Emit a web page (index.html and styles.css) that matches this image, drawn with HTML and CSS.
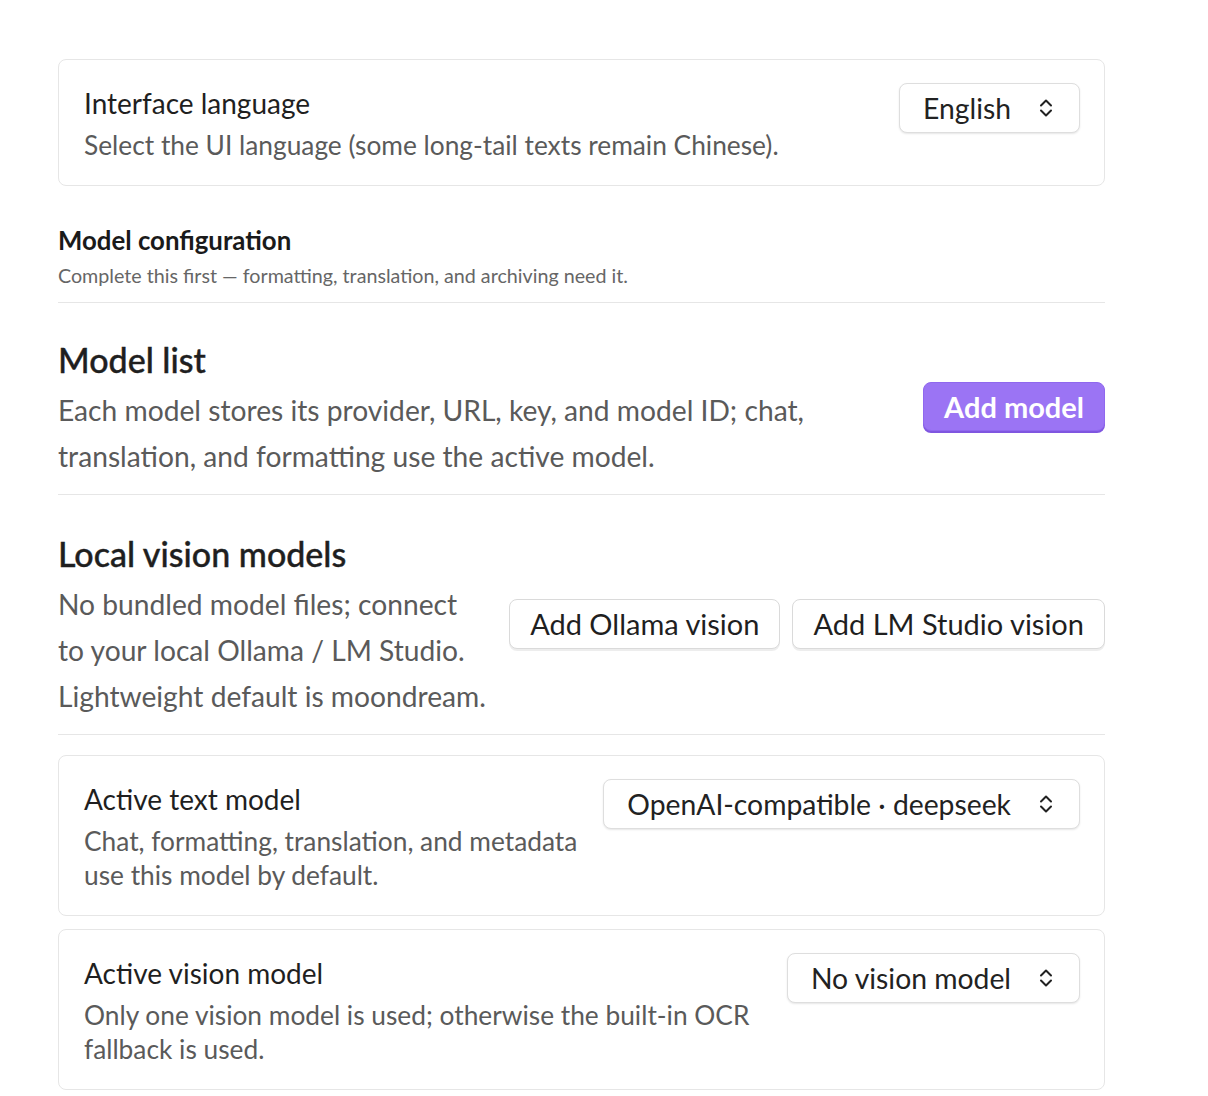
FILE: index.html
```html
<!DOCTYPE html>
<html lang="en">
<head>
<meta charset="utf-8">
<title>Settings</title>
<link rel="stylesheet" href="styles.css">
</head>
<body>
<main class="page">
  <div class="card">
    <div class="info">
      <div class="title">Interface language</div>
      <div class="desc">Select the UI language (some long-tail texts remain Chinese).</div>
    </div>
    <div class="select">
      <span>English</span>
      <svg class="chev" width="14" height="22" viewBox="0 0 14 22"><path d="M2 8.5 L7 3.5 L12 8.5 M2 13.5 L7 18.5 L12 13.5" fill="none" stroke="#222" stroke-width="2" stroke-linecap="round" stroke-linejoin="round"/></svg>
    </div>
  </div>

  <div class="group-head">
    <div class="group-title">Model configuration</div>
    <div class="group-sub">Complete this first — formatting, translation, and archiving need it.</div>
  </div>

  <section class="section">
    <div class="section-text">
      <h2 class="section-title">Model list</h2>
      <p class="section-desc">Each model stores its provider, URL, key, and model ID; chat, translation, and formatting use the active model.</p>
    </div>
    <div class="actions">
      <button class="btn primary">Add model</button>
    </div>
  </section>

  <section class="section section-local">
    <div class="section-text">
      <h2 class="section-title">Local vision models</h2>
      <p class="section-desc nowrap">No bundled model files; connect<br>to your local Ollama / LM Studio.<br>Lightweight default is moondream.</p>
    </div>
    <div class="actions">
      <button class="btn">Add Ollama vision</button>
      <button class="btn">Add LM Studio vision</button>
    </div>
  </section>

  <div class="card card-first">
    <div class="info">
      <div class="title">Active text model</div>
      <div class="desc">Chat, formatting, translation, and metadata use this model by default.</div>
    </div>
    <div class="select">
      <span>OpenAI-compatible · deepseek</span>
      <svg class="chev" width="14" height="22" viewBox="0 0 14 22"><path d="M2 8.5 L7 3.5 L12 8.5 M2 13.5 L7 18.5 L12 13.5" fill="none" stroke="#222" stroke-width="2" stroke-linecap="round" stroke-linejoin="round"/></svg>
    </div>
  </div>

  <div class="card card-next">
    <div class="info">
      <div class="title">Active vision model</div>
      <div class="desc">Only one vision model is used; otherwise the built-in OCR fallback is used.</div>
    </div>
    <div class="select">
      <span>No vision model</span>
      <svg class="chev" width="14" height="22" viewBox="0 0 14 22"><path d="M2 8.5 L7 3.5 L12 8.5 M2 13.5 L7 18.5 L12 13.5" fill="none" stroke="#222" stroke-width="2" stroke-linecap="round" stroke-linejoin="round"/></svg>
    </div>
  </div>
</main>
</body>
</html>
```

FILE: styles.css
```css
* { box-sizing: border-box; }

html, body {
  margin: 0;
  padding: 0;
  background: #ffffff;
}

body {
  font-family: Lato, "Noto Sans", "Liberation Sans", sans-serif;
  color: #222222;
}

.page {
  width: 1105px;
  padding: 59px 0 0 58px;
}

.card {
  display: flex;
  align-items: flex-start;
  gap: 24px;
  border: 1px solid #e6e6e6;
  border-radius: 8px;
  padding: 23px 24px 23px 25px;
  background: #fff;
}

.card-first { margin-top: 20px; }
.card-next { margin-top: 13px; }

.info {
  flex: 1;
  min-width: 0;
}

.title {
  font-size: 28px;
  line-height: 41px;
  color: #1f1f1f;
}

.desc {
  margin-top: 4px;
  font-size: 26.3px;
  line-height: 34px;
  color: #5a5a5a;
}

.select {
  flex-shrink: 0;
  display: inline-flex;
  align-items: center;
  gap: 28px;
  height: 50px;
  padding: 0 26px 0 23px;
  border: 1px solid #dedede;
  border-radius: 8px;
  box-shadow: 0 1px 2px rgba(0, 0, 0, 0.10);
  font-size: 28.3px;
  color: #222;
  background: #fff;
}

.chev { display: block; }

.group-head {
  margin-top: 38px;
  padding-bottom: 13px;
  border-bottom: 1px solid #e6e6e6;
}

.group-title {
  font-size: 25.8px;
  line-height: 32px;
  font-weight: 700;
  color: #1a1a1a;
}

.group-sub {
  margin-top: 7px;
  font-size: 19.7px;
  line-height: 26px;
  color: #666666;
}

.section {
  display: flex;
  align-items: center;
  gap: 22px;
  padding: 35px 0 15px;
  border-bottom: 1px solid #e6e6e6;
}

.section-local {
  padding-top: 37px;
}

.section-text {
  flex: 1;
  min-width: 0;
}

.section-title {
  margin: 0;
  font-size: 34px;
  line-height: 44px;
  font-weight: 500;
  color: #1f1f1f;
  -webkit-text-stroke: 0.4px #1f1f1f;
}

.section-desc {
  margin: 5px 0 0;
  font-size: 28.2px;
  line-height: 46px;
  color: #5a5a5a;
}

.nowrap { white-space: nowrap; }

.actions {
  flex-shrink: 0;
  display: flex;
  gap: 12px;
  margin-top: -4px;
}

.btn {
  height: 50px;
  padding: 0 20px;
  border: 1px solid #dadada;
  border-radius: 8px;
  background: #fff;
  box-shadow: 0 2px 0 rgba(0, 0, 0, 0.07);
  font-family: inherit;
  font-size: 29px;
  color: #1f1f1f;
}

.btn.primary {
  height: 49px;
  background: #9b74f4;
  border-color: #9068ee;
  box-shadow: 0 2px 0 #7f56e0;
  color: #ffffff;
  font-weight: 700;
}
```
